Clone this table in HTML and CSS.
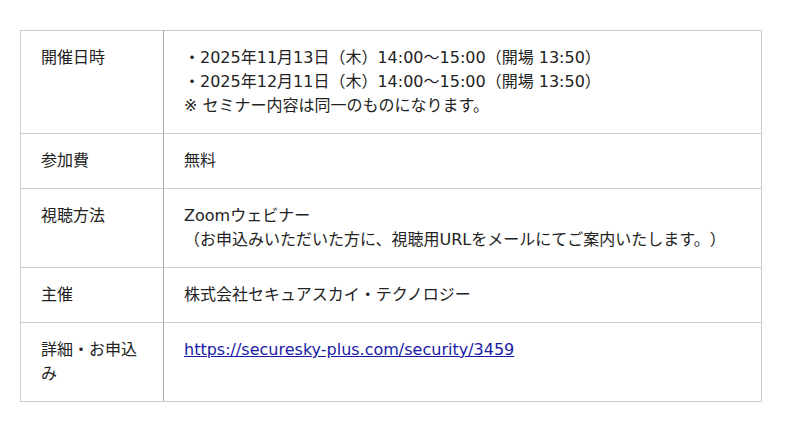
FILE: index.html
```html
<!DOCTYPE html>
<html lang="ja">
<head>
<meta charset="utf-8">
<link rel="stylesheet" href="styles.css">
</head>
<body>
<div class="wrap">
<table class="info">
  <tr>
    <th>開催日時</th>
    <td>・2025年11月13日（木）14:00〜15:00（開場 13:50）<br>・2025年12月11日（木）14:00〜15:00（開場 13:50）<br>※ セミナー内容は同一のものになります。</td>
  </tr>
  <tr>
    <th>参加費</th>
    <td>無料</td>
  </tr>
  <tr>
    <th>視聴方法</th>
    <td>Zoomウェビナー<br>（お申込みいただいた方に、視聴用URLをメールにてご案内いたします。）</td>
  </tr>
  <tr>
    <th>主催</th>
    <td>株式会社セキュアスカイ・テクノロジー</td>
  </tr>
  <tr>
    <th>詳細・お申込み</th>
    <td><a class="link" href="#">https://securesky-plus.com/security/3459</a></td>
  </tr>
</table>
</div>
</body>
</html>
```
FILE: styles.css
```css
html, body {
  margin: 0;
  padding: 0;
  background: #fff;
}
.wrap {
  padding: 30px 20px;
}
.info {
  width: 742px;
  border-collapse: collapse;
  font-family: "DejaVu Sans", "Noto Sans CJK JP", sans-serif;
  font-size: 16px;
  line-height: 24px;
  color: #222;
  text-spacing-trim: space-all;
}
.info th, .info td {
  border: 1px solid #ccc;
  padding: 15px 20px;
  text-align: left;
  vertical-align: top;
  font-weight: normal;
}
.info th {
  width: 102px;
  border-right-color: #aaa;
}
.link {
  color: #1a1aa6;
  text-decoration: underline;
}
```
